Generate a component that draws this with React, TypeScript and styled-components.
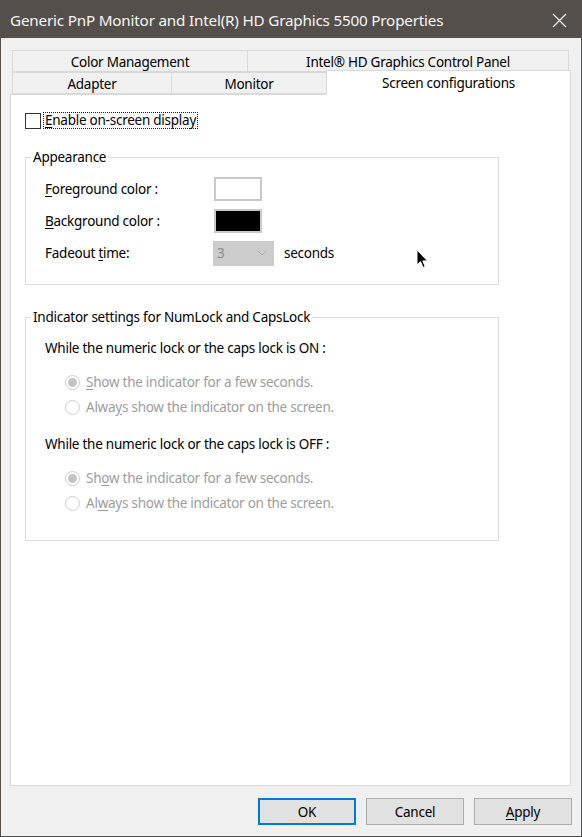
import React from 'react';
import styled, { createGlobalStyle } from 'styled-components';

const GlobalStyle = createGlobalStyle`
  html, body { margin: 0; padding: 0; background: #f0f0f0; }
  body { font-family: "Noto Sans", "Open Sans", sans-serif; }
  * { box-sizing: border-box; }
`;

const FONT = 13.5;

const Window = styled.div`
  width: 582px;
  height: 837px;
  display: flex;
  flex-direction: column;
  position: relative;
  overflow: hidden;
`;

const TitleBar = styled.div`
  height: 38px;
  flex: none;
  background: #554f4b;
  display: flex;
  align-items: center;
  justify-content: space-between;
  padding: 2px 15px 0 10px;
  color: #f5f5f5;
  font-size: 15.25px;
  letter-spacing: -0.2px;
`;

const Frame = styled.div`
  flex: 1;
  display: flex;
  flex-direction: column;
  background: #f0f0f0;
  border: 1px solid #554f4b;
  border-top: none;
  padding: 12px 9px 0 9px;
  font-size: ${FONT}px;
  letter-spacing: -0.25px;
  color: #000;
`;

const TabStrip = styled.div`
  display: flex;
  flex-direction: column;
  padding: 0 2px;
  position: relative;
  z-index: 2;
`;

const TabRow = styled.div`
  display: flex;
  height: 22px;
`;

const Tab = styled.div<{ $w: number; $active?: boolean; $first?: boolean }>`
  width: ${(p) => p.$w}px;
  flex: none;
  height: ${(p) => (p.$active ? 25 : 22)}px;
  margin-top: ${(p) => (p.$active ? -2 : 0)}px;
  margin-left: ${(p) => (p.$first ? 0 : -1)}px;
  margin-right: ${(p) => (p.$active ? -2 : 0)}px;
  border: 1px solid #d9d9d9;
  border-bottom: ${(p) => (p.$active ? 'none' : '1px solid #d9d9d9')};
  background: ${(p) => (p.$active ? '#ffffff' : '#f0f0f0')};
  display: flex;
  justify-content: center;
  align-items: ${(p) => (p.$active ? 'flex-start' : 'center')};
  padding-top: ${(p) => (p.$active ? 2 : 1)}px;
  line-height: 20px;
  white-space: nowrap;
  position: relative;
  z-index: ${(p) => (p.$active ? 3 : 1)};
`;

const Panel = styled.div`
  height: 692px;
  width: 561px;
  flex: none;
  background: #ffffff;
  border: 1px solid #d9d9d9;
  padding: 17px 0 0 14px;
  display: flex;
  flex-direction: column;
  position: relative;
  z-index: 1;
`;

const CheckRow = styled.label`
  display: flex;
  align-items: center;
  height: 17px;
`;

const CheckBox = styled.span`
  width: 16px;
  height: 16px;
  border: 1px solid #333333;
  background: #fff;
  flex: none;
`;

const FocusLabel = styled.span`
  margin-left: 2px;
  padding: 0 1px 0 1px;
  border: 1px dotted #222;
  line-height: 15px;
`;

const U = styled.span`
  text-decoration: underline;
  text-underline-offset: 2px;
`;

const Group = styled.fieldset<{ $h: number; $mt: number }>`
  margin: ${(p) => p.$mt}px 0 0 0;
  width: 474px;
  height: ${(p) => p.$h}px;
  border: 1px solid #dcdcdc;
  padding: 0;
  min-inline-size: 0;
`;

const Legend = styled.legend`
  margin-left: 5px;
  padding: 0 2px;
  line-height: 18px;
`;

const GroupBody = styled.div`
  display: flex;
  flex-direction: column;
  padding-left: 19px;
`;

const FieldRow = styled.div<{ $mt: number }>`
  display: flex;
  align-items: center;
  height: 24px;
  margin-top: ${(p) => p.$mt}px;
`;

const FieldLabel = styled.span`
  width: 169px;
  flex: none;
`;

const Swatch = styled.span<{ $color: string }>`
  width: 48px;
  height: 24px;
  border: 2px solid #c9c9c9;
  background: ${(p) => p.$color};
  flex: none;
`;

const Combo = styled.div`
  width: 61px;
  height: 25px;
  margin-left: -1px;
  background: #cccccc;
  color: #8a8a8a;
  display: flex;
  align-items: center;
  justify-content: space-between;
  padding: 0 7px 0 4px;
  flex: none;
`;

const Unit = styled.span`
  margin-left: 10px;
`;

const Heading = styled.div<{ $mt: number }>`
  line-height: 18px;
  margin-top: ${(p) => p.$mt}px;
`;

const RadioRow = styled.div<{ $mt: number }>`
  display: flex;
  align-items: center;
  height: 18px;
  margin-top: ${(p) => p.$mt}px;
  padding-left: 20px;
  color: #9d9d9d;
`;

const Radio = styled.span<{ $checked?: boolean }>`
  width: 15px;
  height: 15px;
  border-radius: 50%;
  border: 1px solid #cccccc;
  background: #fff;
  margin-right: 6px;
  flex: none;
  display: flex;
  align-items: center;
  justify-content: center;
  &::after {
    content: '';
    width: 9px;
    height: 9px;
    border-radius: 50%;
    background: ${(p) => (p.$checked ? '#c4c4c4' : 'transparent')};
  }
`;

const ButtonRow = styled.div`
  display: flex;
  justify-content: flex-end;
  gap: 10px;
  margin-top: 12px;
`;

const Button = styled.button<{ $default?: boolean }>`
  width: 98px;
  height: 27px;
  font: inherit;
  letter-spacing: inherit;
  color: #000;
  background: #e1e1e1;
  border: ${(p) => (p.$default ? '2px solid #0078d7' : '1px solid #adadad')};
  padding: 0;
  margin: 0;
`;

const Cursor = styled.svg`
  position: absolute;
  left: 416px;
  top: 249px;
  z-index: 10;
`;

const CloseIcon = () => (
  <svg width="15" height="15" viewBox="0 0 15 15">
    <path d="M1 1 L14 14 M14 1 L1 14" stroke="#ececec" strokeWidth="1.3" fill="none" />
  </svg>
);

const Chevron = () => (
  <svg width="10" height="6" viewBox="0 0 10 6">
    <path d="M0.5 0.5 L5 5 L9.5 0.5" stroke="#a6a6a6" strokeWidth="1" fill="none" />
  </svg>
);

export default function App() {
  return (
    <>
      <GlobalStyle />
      <Window>
        <TitleBar>
          <span>Generic PnP Monitor and Intel(R) HD Graphics 5500 Properties</span>
          <CloseIcon />
        </TitleBar>
        <Frame>
          <TabStrip>
            <TabRow>
              <Tab $w={236} $first>Color Management</Tab>
              <Tab $w={322}>Intel® HD Graphics Control Panel</Tab>
            </TabRow>
            <TabRow>
              <Tab $w={160} $first>Adapter</Tab>
              <Tab $w={156}>Monitor</Tab>
              <Tab $w={245} $active>Screen configurations</Tab>
            </TabRow>
          </TabStrip>
          <Panel>
            <CheckRow>
              <CheckBox />
              <FocusLabel>
                <U>E</U>nable on-screen display
              </FocusLabel>
            </CheckRow>
            <Group $h={137} $mt={19}>
              <Legend>Appearance</Legend>
              <GroupBody>
                <FieldRow $mt={11}>
                  <FieldLabel>
                    <U>F</U>oreground color :
                  </FieldLabel>
                  <Swatch $color="#ffffff" />
                </FieldRow>
                <FieldRow $mt={8}>
                  <FieldLabel>
                    <U>B</U>ackground color :
                  </FieldLabel>
                  <Swatch $color="#000000" />
                </FieldRow>
                <FieldRow $mt={8}>
                  <FieldLabel>
                    Fadeout <U>t</U>ime:
                  </FieldLabel>
                  <Combo>
                    <span>3</span>
                    <Chevron />
                  </Combo>
                  <Unit>seconds</Unit>
                </FieldRow>
              </GroupBody>
            </Group>
            <Group $h={233} $mt={23}>
              <Legend>Indicator settings for NumLock and CapsLock</Legend>
              <GroupBody>
                <Heading $mt={13}>While the numeric lock or the caps lock is ON :</Heading>
                <RadioRow $mt={16}>
                  <Radio $checked />
                  <span>
                    <U>S</U>how the indicator for a few seconds.
                  </span>
                </RadioRow>
                <RadioRow $mt={7}>
                  <Radio />
                  <span>
                    Alwa<U>y</U>s show the indicator on the screen.
                  </span>
                </RadioRow>
                <Heading $mt={19}>While the numeric lock or the caps lock is OFF :</Heading>
                <RadioRow $mt={16}>
                  <Radio $checked />
                  <span>
                    Sh<U>o</U>w the indicator for a few seconds.
                  </span>
                </RadioRow>
                <RadioRow $mt={7}>
                  <Radio />
                  <span>
                    Al<U>w</U>ays show the indicator on the screen.
                  </span>
                </RadioRow>
              </GroupBody>
            </Group>
          </Panel>
          <ButtonRow>
            <Button $default>OK</Button>
            <Button>Cancel</Button>
            <Button>
              <U>A</U>pply
            </Button>
          </ButtonRow>
        </Frame>
        <Cursor width="13" height="20" viewBox="0 0 13 20">
          <path
            d="M1 1 L1 16 L4.5 12.6 L7 18.5 L9.2 17.6 L6.8 11.9 L11.5 11.9 Z"
            fill="#000"
            stroke="#fff"
            strokeWidth="1"
            strokeLinejoin="round"
          />
        </Cursor>
      </Window>
    </>
  );
}
